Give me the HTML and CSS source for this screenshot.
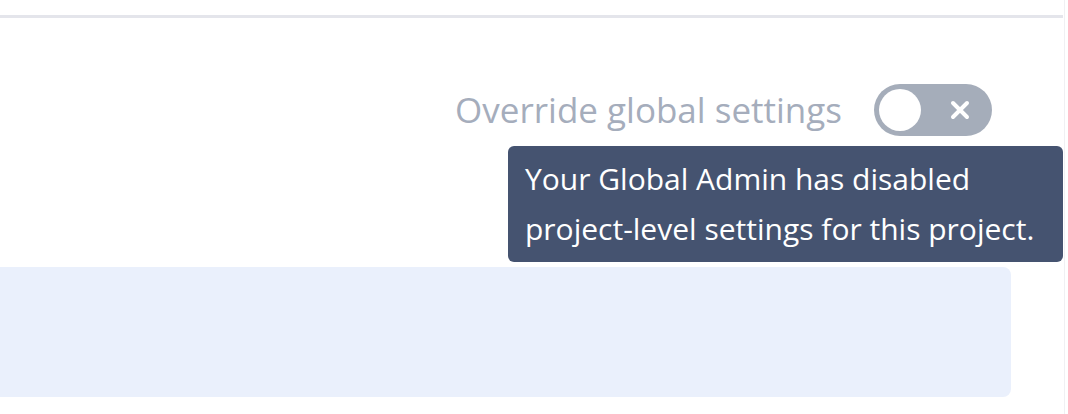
FILE: index.html
```html
<!DOCTYPE html>
<html>
<head>
<meta charset="utf-8">
<link rel="stylesheet" href="styles.css">
</head>
<body>
<div class="page">
  <div class="divider"></div>
  <div class="settings-row">
    <span class="label">Override global settings</span>
    <div class="toggle-wrap">
      <div class="toggle">
        <span class="knob"></span>
        <svg class="toggle-x" width="20" height="20" viewBox="0 0 20 20"><path d="M3 3 L17 17 M17 3 L3 17" stroke="#fff" stroke-width="4" stroke-linecap="round"/></svg>
      </div>
      <div class="tooltip">Your Global Admin has disabled<br>project-level settings for this project.</div>
    </div>
  </div>
  <div class="panel"></div>
</div>
</body>
</html>
```
FILE: styles.css
```css
html, body {
  margin: 0;
  padding: 0;
  background: #ffffff;
  font-family: "Open Sans", "Noto Sans", sans-serif;
}
.page {
  width: 1065px;
  height: 414px;
  border-right: 1px solid #f0f0f3;
  box-sizing: border-box;
  overflow: hidden;
}
.divider {
  margin-top: 15px;
  width: 1063px;
  height: 3px;
  background: #e4e5eb;
}
.settings-row {
  display: flex;
  justify-content: flex-end;
  align-items: center;
  gap: 32px;
  margin-top: 66px;
  padding-right: 72px;
  height: 52px;
}
.label {
  font-size: 35px;
  line-height: 44px;
  color: #a5adbc;
  white-space: nowrap;
}
.toggle-wrap {
  position: relative;
}
.toggle {
  width: 118px;
  height: 52px;
  border-radius: 26px;
  background: #a5adba;
  display: flex;
  align-items: center;
  justify-content: space-between;
  padding: 0 22px 0 5px;
  box-sizing: border-box;
}
.knob {
  width: 42px;
  height: 42px;
  border-radius: 50%;
  background: #ffffff;
}
.toggle-x {
  display: block;
}
.tooltip {
  position: absolute;
  top: 62px;
  right: -71px;
  width: 555px;
  box-sizing: border-box;
  padding: 8px 16px 8px 17px;
  background: #455370;
  color: #ffffff;
  border-radius: 6px;
  font-size: 30px;
  line-height: 50px;
  white-space: nowrap;
}
.panel {
  margin-top: 131px;
  width: 1011px;
  height: 130px;
  background: #eaf0fc;
  border-radius: 0 8px 8px 0;
}
```
